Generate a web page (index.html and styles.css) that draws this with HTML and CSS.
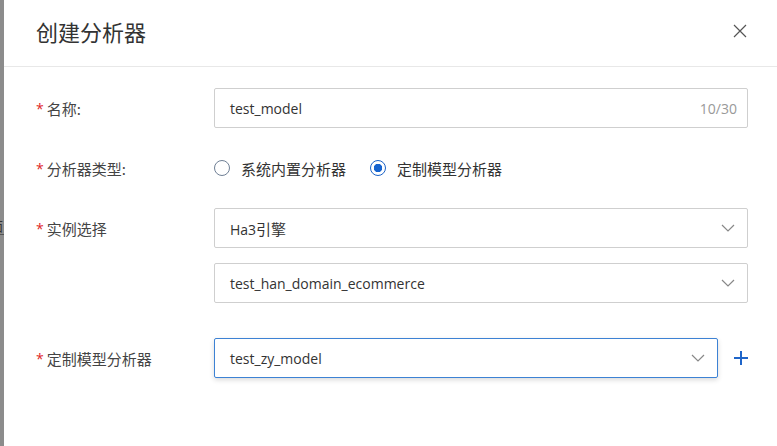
FILE: index.html
```html
<!DOCTYPE html>
<html lang="zh">
<head>
<meta charset="utf-8">
<link rel="stylesheet" href="styles.css">
</head>
<body>
<div class="page">
  <div class="backdrop"><span class="bg-char">面</span></div>
  <div class="dialog">
    <div class="header">
      <h1 class="title">创建分析器</h1>
      <svg class="close" width="14" height="14" viewBox="0 0 14 14"><path d="M1 1L13 13M13 1L1 13" stroke="#555" stroke-width="1.2" fill="none"/></svg>
    </div>
    <div class="form">
      <div class="row">
        <div class="label"><span class="req">*</span>名称:</div>
        <div class="control">
          <div class="input"><span class="val">test_model</span><span class="count">10/30</span></div>
        </div>
      </div>
      <div class="row">
        <div class="label"><span class="req">*</span>分析器类型:</div>
        <div class="control radios">
          <label class="radio"><span class="circle"></span>系统内置分析器</label>
          <label class="radio checked"><span class="circle"></span>定制模型分析器</label>
        </div>
      </div>
      <div class="row top">
        <div class="label"><span class="req">*</span>实例选择</div>
        <div class="control stack">
          <div class="input select"><span class="val">Ha3<span class="cjk">引擎</span></span><svg class="chev" width="14" height="8" viewBox="0 0 14 8"><path d="M1 1L7 7L13 1" stroke="#888" stroke-width="1.2" fill="none"/></svg></div>
          <div class="input select"><span class="val">test_han_domain_ecommerce</span><svg class="chev" width="14" height="8" viewBox="0 0 14 8"><path d="M1 1L7 7L13 1" stroke="#888" stroke-width="1.2" fill="none"/></svg></div>
        </div>
      </div>
      <div class="row last">
        <div class="label"><span class="req">*</span>定制模型分析器</div>
        <div class="control withadd">
          <div class="input select focus"><span class="val">test_zy_model</span><svg class="chev" width="14" height="8" viewBox="0 0 14 8"><path d="M1 1L7 7L13 1" stroke="#888" stroke-width="1.2" fill="none"/></svg></div>
          <svg class="plus" width="14" height="14" viewBox="0 0 14 14"><path d="M7 0V14M0 7H14" stroke="#1f65c9" stroke-width="2" fill="none"/></svg>
        </div>
      </div>
    </div>
  </div>
</div>
</body>
</html>
```
FILE: styles.css
```css
html, body {
  margin: 0;
  padding: 0;
  background: #fff;
}
body {
  font-family: "Open Sans", "Noto Sans CJK SC", sans-serif;
  font-size: 14px;
  color: #333;
}
.page {
  display: flex;
  width: 777px;
  height: 446px;
  overflow: hidden;
}
.backdrop {
  width: 4px;
  flex: none;
  background: #8c8c8c;
  overflow: hidden;
  padding-top: 218px;
  box-sizing: border-box;
}
.bg-char {
  display: block;
  margin-left: -10px;
  font-size: 13px;
  line-height: 16px;
  color: #333;
  border-bottom: 1px solid #555;
  width: 14px;
}
.dialog {
  flex: 1;
  background: #fff;
  display: flex;
  flex-direction: column;
}
.header {
  height: 67px;
  box-sizing: border-box;
  border-bottom: 1px solid #e8e8e8;
  display: flex;
  align-items: center;
  justify-content: space-between;
  padding: 0 29px 4px 32px;
}
.title {
  margin: 0;
  font-size: 22px;
  font-weight: 400;
  color: #333;
  font-family: "Noto Sans CJK SC", sans-serif;
}
.close {
  display: block;
  margin-right: 1px;
}
.form {
  padding: 21px 29px 0 32px;
  display: flex;
  flex-direction: column;
  gap: 20px;
}
.row {
  display: flex;
  align-items: center;
}
.row.top {
  align-items: flex-start;
}
.row.top .label {
  height: 40px;
}
.row.last {
  margin-top: 15px;
}
.label {
  width: 178px;
  flex: none;
  display: flex;
  align-items: center;
  font-family: "Noto Sans CJK SC", sans-serif;
  font-size: 15px;
  color: #444;
}
.req {
  color: #e02828;
  margin-right: 3px;
  font-size: 14px;
  font-family: "Open Sans", sans-serif;
}
.control {
  flex: 1;
  min-width: 0;
}
.stack {
  display: flex;
  flex-direction: column;
  gap: 15px;
}
.input {
  height: 40px;
  box-sizing: border-box;
  border: 1px solid #cfcfcf;
  border-radius: 2px;
  display: flex;
  align-items: center;
  justify-content: space-between;
  padding: 0 10px 0 15px;
  color: #333;
}
.val {
  font-family: "Open Sans", "Noto Sans CJK SC", sans-serif;
}
.cjk {
  font-family: "Noto Sans CJK SC", sans-serif;
  font-size: 15px;
}
.count {
  color: #999;
}
.select {
  padding-right: 12px;
}
.chev {
  display: block;
}
.focus {
  border-color: #3d82d4;
  box-shadow: 0 2px 5px rgba(0, 0, 0, 0.15);
}
.withadd {
  display: flex;
  align-items: center;
}
.withadd .input {
  flex: 1;
}
.plus {
  display: block;
  flex: none;
  margin: 0 0 0 16px;
}
.radios {
  display: flex;
  align-items: center;
  height: 40px;
  gap: 24px;
}
.radio {
  display: flex;
  align-items: center;
  font-family: "Noto Sans CJK SC", sans-serif;
  font-size: 15px;
  color: #333;
}
.circle {
  width: 16px;
  height: 16px;
  box-sizing: border-box;
  border: 1px solid #6f7f95;
  border-radius: 50%;
  margin-right: 11px;
  background: #fff;
}
.checked .circle {
  border-color: #1a62c6;
  border-width: 1.5px;
  background: radial-gradient(circle, #1563cf 0 4px, #fff 4.5px);
}
```
